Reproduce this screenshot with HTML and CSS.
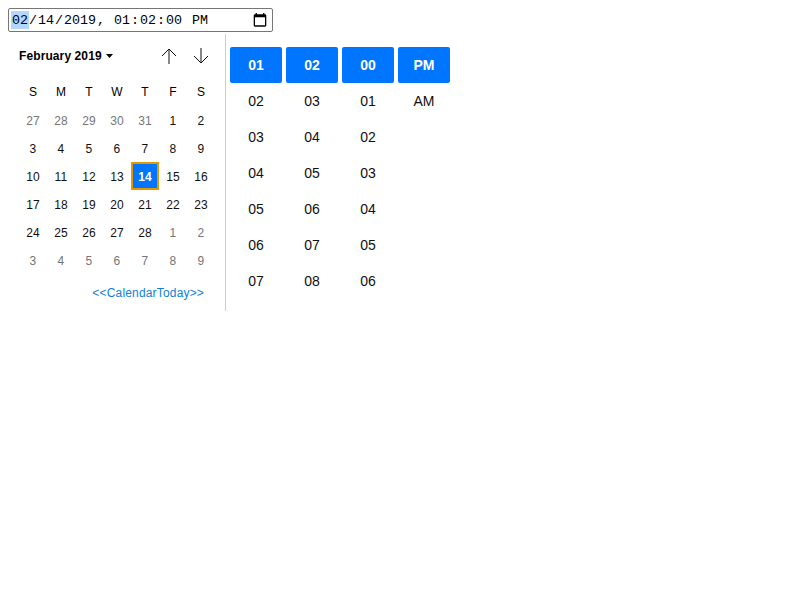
FILE: index.html
```html
<!DOCTYPE html>
<html lang="en">
<head>
<meta charset="utf-8">
<title>Date and time picker</title>
<link rel="stylesheet" href="styles.css">
</head>
<body>
<div class="field">
  <div class="value"><span class="part active">02</span>/<span class="part">14</span>/<span class="part">2019</span>, <span class="part">01</span>:<span class="part">02</span>:<span class="part">00</span> <span class="part">PM</span></div>
  <svg class="field-icon" width="16" height="16" viewBox="0 0 16 16"><path d="M13 2.330h-.6V1h-1.300v1.330H4.900V1H3.600v1.330H3c-.7 0-1.300.6-1.300 1.300v9.700c0 .7.6 1.300 1.300 1.300h10c.7 0 1.300-.6 1.300-1.300v-9.700c0-.7-.6-1.300-1.300-1.300zm0 11H3V5.330h10v8z"/></svg>
</div>
<div class="popup">
  <section class="calendar">
    <header class="calendar-header">
      <div class="month">February 2019<svg width="7" height="4" viewBox="0 0 7 4"><path d="M0 0h7L3.500 4z"/></svg></div>
      <div class="arrows">
        <svg width="16" height="16" viewBox="0 0 16 16"><path d="M8 16V1M1 8l7-7 7 7"/></svg>
        <svg width="16" height="16" viewBox="0 0 16 16"><path d="M8 0v15M1 8l7 7 7-7"/></svg>
      </div>
    </header>
    <div class="weekdays"><span>S</span><span>M</span><span>T</span><span>W</span><span>T</span><span>F</span><span>S</span></div>
    <div class="days">
      <span class="out">27</span><span class="out">28</span><span class="out">29</span><span class="out">30</span><span class="out">31</span><span>1</span><span>2</span>
      <span>3</span><span>4</span><span>5</span><span>6</span><span>7</span><span>8</span><span>9</span>
      <span>10</span><span>11</span><span>12</span><span>13</span><span class="selected">14</span><span>15</span><span>16</span>
      <span>17</span><span>18</span><span>19</span><span>20</span><span>21</span><span>22</span><span>23</span>
      <span>24</span><span>25</span><span>26</span><span>27</span><span>28</span><span class="out">1</span><span class="out">2</span>
      <span class="out">3</span><span class="out">4</span><span class="out">5</span><span class="out">6</span><span class="out">7</span><span class="out">8</span><span class="out">9</span>
    </div>
    <div class="today">&lt;&lt;CalendarToday&gt;&gt;</div>
  </section>
  <section class="time">
    <div class="column"><b>01</b><span>02</span><span>03</span><span>04</span><span>05</span><span>06</span><span>07</span></div>
    <div class="column"><b>02</b><span>03</span><span>04</span><span>05</span><span>06</span><span>07</span><span>08</span></div>
    <div class="column"><b>00</b><span>01</span><span>02</span><span>03</span><span>04</span><span>05</span><span>06</span></div>
    <div class="column"><b>PM</b><span>AM</span></div>
  </section>
</div>
</body>
</html>
```
FILE: styles.css
```css
* { box-sizing: border-box; }
body {
  margin: 8px;
  background: #fff;
  color: #101010;
  font-family: "Liberation Sans", Arial, sans-serif;
  font-size: 12px;
}
.field {
  display: flex;
  align-items: center;
  justify-content: space-between;
  width: 265px;
  height: 24px;
  padding: 0 4px 0 2px;
  border: 1px solid #767676;
  border-radius: 2px;
}
.value {
  height: 18px;
  color: #000;
  font: 13.3333px/20px "Liberation Mono", monospace;
  white-space: pre;
}
.part { display: inline-block; height: 18px; padding: 0 1px; vertical-align: top; }
.part.active { background: #b3d7ff; }
.field-icon { display: block; }
.popup { display: flex; margin-top: 2px; }
.calendar {
  width: 218px;
  height: 277px;
  padding: 6px 10px 0 11px;
  border-right: 1px solid #ccc;
}
.calendar-header {
  display: flex;
  align-items: center;
  justify-content: space-between;
  height: 32px;
}
.month { display: flex; align-items: center; gap: 4px; color: #000; font-weight: bold; letter-spacing: 0.1px; }
.arrows { display: flex; gap: 16px; padding-right: 6px; }
.arrows svg { fill: none; stroke: #101010; stroke-width: 1; }
.weekdays, .days { display: grid; grid-template-columns: repeat(7, 28px); text-align: center; }
.weekdays { height: 34px; line-height: 41px; color: #000; }
.days { grid-auto-rows: 28px; line-height: 30px; letter-spacing: 0.2px; }
.out { color: #757575; }
.selected {
  border: 2px solid #e59700;
  background: #0075ff;
  color: #fff;
  font-weight: bold;
  line-height: 26px;
}
.today { padding: 11px 11px 0 0; color: #0f7fdb; letter-spacing: 0.17px; line-height: 16px; text-align: right; }
.time { display: flex; gap: 4px; padding: 13px 0 0 4px; font-size: 14px; }
.column { display: grid; grid-auto-rows: 36px; width: 52px; align-content: start; line-height: 36px; text-align: center; }
.column b { border-radius: 2px; background: #0075ff; color: #fff; }
```
